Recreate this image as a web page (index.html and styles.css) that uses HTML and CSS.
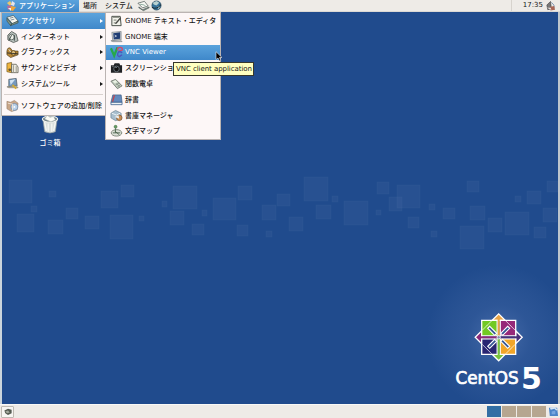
FILE: index.html
```html
<!DOCTYPE html>
<html lang="ja">
<head>
<meta charset="utf-8">
<title>デスクトップ</title>
<link rel="stylesheet" href="styles.css">
</head>
<body>
<div class="screen">
  <header class="panel top">
    <div class="menu-title active">
      <svg class="foot" viewBox="0 0 12 12"><path d="M2 3l3-2 2 3-2 2z" fill="#e9c76a"/><path d="M7 1l3 2-1 3-3-1z" fill="#e8e3ea"/><path d="M2 6l4-1 1 3-4 2z" fill="#b86b9c"/><path d="M6 6l5 1-3 4-3-1z" fill="#f0a53a"/><path d="M3 8l3 0 0 3z" fill="#f6f2e6"/></svg>
      <span class="t apps">アプリケーション</span>
    </div>
    <span class="t place">場所</span>
    <span class="t system">システム</span>
    <svg class="launch" viewBox="0 0 14 12"><path d="M1 3l7-2 4 5-6 2z" fill="#f8f8f4" stroke="#53605d" stroke-width=".8"/><path d="M2 7l4 3 7-3v1l-6 3-5-3z" fill="#91a69f" stroke="#34413f" stroke-width=".6"/><path d="M3 4l5 1 2 2" stroke="#87a79a" fill="none"/></svg>
    <svg class="globe" viewBox="0 0 12 12"><circle cx="6" cy="6" r="5" fill="#347199" stroke="#233e50" stroke-width=".7"/><path d="M2 3l4-2 3 2-3 3-3-1zM7 7l3 0-2 3z" fill="#b7d0d0"/><path d="M1 8q5 3 10-3" stroke="#18252d" fill="none"/></svg>
    <span class="clock">17:35</span>
    <svg class="volume" viewBox="0 0 12 12"><path d="M2 5l4-4 1 8-4 1z" fill="#777" stroke="#333" stroke-width=".6"/><path d="M7 2q4 3 3 6" fill="none" stroke="#7992b0"/><path d="M5 7l5-1 1 4-5 1z" fill="#a86554"/><path d="M2 8l4 0 1 2z" fill="#eee"/></svg>
  </header>

  <main class="desktop">
    <svg class="wall" viewBox="0 0 560 392" aria-hidden="true">
      <defs><radialGradient id="glow"><stop offset="0" stop-color="#6383bd" stop-opacity=".6"/><stop offset=".45" stop-color="#5577b4" stop-opacity=".25"/><stop offset="1" stop-color="#6383bd" stop-opacity="0"/></radialGradient></defs>
      <g class="squares">
        <rect x="9" y="168" width="23" height="23"/><rect x="17" y="202" width="17" height="18"/><rect x="49" y="179" width="7" height="6"/><rect x="31" y="194" width="6" height="6"/><rect x="48" y="208" width="15" height="14"/><rect x="66" y="196" width="12" height="11"/><rect x="85" y="204" width="14" height="13"/><rect x="101" y="179" width="17" height="17"/><rect x="121" y="173" width="13" height="12"/><rect x="110" y="203" width="23" height="24"/><rect x="139" y="204" width="5" height="5"/><rect x="162" y="189" width="5" height="6"/><rect x="173" y="174" width="24" height="23"/><rect x="170" y="199" width="14" height="14"/><rect x="192" y="212" width="12" height="11"/><rect x="202" y="198" width="5" height="6"/><rect x="213" y="186" width="23" height="22"/><rect x="238" y="174" width="14" height="14"/><rect x="237" y="213" width="11" height="11"/><rect x="262" y="193" width="14" height="15"/><rect x="266" y="219" width="6" height="6"/><rect x="277" y="182" width="13" height="12"/><rect x="289" y="205" width="14" height="14"/><rect x="304" y="165" width="24" height="24"/><rect x="316" y="193" width="15" height="14"/><rect x="344" y="189" width="24" height="24"/><rect x="332" y="184" width="6" height="6"/><rect x="377" y="170" width="12" height="12"/><rect x="397" y="173" width="23" height="23"/><rect x="389" y="185" width="13" height="14"/><rect x="408" y="205" width="11" height="11"/><rect x="376" y="198" width="5" height="5"/><rect x="429" y="192" width="6" height="6"/><rect x="443" y="196" width="12" height="11"/><rect x="431" y="219" width="6" height="6"/><rect x="467" y="169" width="12" height="11"/><rect x="470" y="194" width="15" height="14"/><rect x="460" y="214" width="24" height="23"/><rect x="488" y="206" width="14" height="14"/><rect x="505" y="200" width="24" height="23"/><rect x="515" y="184" width="6" height="6"/><rect x="527" y="179" width="14" height="13"/><rect x="534" y="215" width="12" height="11"/><rect x="543" y="196" width="14" height="14"/><rect x="547" y="169" width="11" height="11"/>
      </g>
      <circle cx="499" cy="325" r="72" fill="url(#glow)"/>
      <g transform="translate(498.7 325.3)" stroke="#fff" stroke-width="1.3">
        <path d="M-6.5-17L0-23.5 6.5-17z" fill="#eaa546"/>
        <path d="M17-6.5L23.5 0 17 6.5z" fill="#483078"/>
        <path d="M6.5 17L0 23.5-6.5 17z" fill="#7ac33d"/>
        <path d="M-17 6.5L-23.5 0-17-6.5z" fill="#8c2878"/>
        <path d="M-17-17H-1.5V-1.5H-17z" fill="#72c923"/><path d="M1.5-17H17V-1.5H1.5z" fill="#962879"/><path d="M1.5 1.5H17V17H1.5z" fill="#f2a629"/><path d="M-17 1.5H-1.5V17H-17z" fill="#292572"/>
        <g stroke="none"><path d="M-1-19H1V-1H-1z" fill="#eaa546"/><path d="M1-1H19V1H1z" fill="#483078"/><path d="M-1 1H1V19H-1z" fill="#7ac33d"/><path d="M-19-1H-1V1H-19z" fill="#8c2878"/></g>
        <g fill="#345494" stroke-width="1.1">
          <path d="M2-4L9-11 11-9 4-2z"/><path d="M4 2L11 9 9 11 2 4z"/><path d="M-2 4L-9 11-11 9-4 2z"/><path d="M-4-2L-11-9-9-11-2-4z"/>
          <path d="M7-16.5L12-11.5M16.5-7L11.5-12M7 16.5L12 11.5M16.5 7L11.5 12M-7-16.5L-12-11.5M-16.5-7L-11.5-12M-7 16.5L-12 11.5M-16.5 7L-11.5 12" stroke-width=".7"/>
        </g>
        <circle r="1.7" fill="#7989ac" stroke-width=".8"/>
      </g>
      <text class="brand" x="455.5" y="372.2">CentOS</text>
      <text class="five" x="521" y="377">5</text>
    </svg>

    <div class="trash">
      <svg viewBox="0 0 20 22"><path d="M2 5l2 14q6 3 12 0l2-14z" fill="#d9dfdd" stroke="#8b9698" stroke-width=".7"/><path d="M4 8l2 10M8 10v9M12 10v9M16 8l-2 10" stroke="#f8f9f5" stroke-width="1.3"/><ellipse cx="10" cy="5" rx="8.5" ry="3.4" fill="#6e7e84" stroke="#f4f5f0" stroke-width="1.2"/><path d="M4 5l3-4 3 2 4-1 2 4-5 2z" fill="#fbfbf5" stroke="#9daaa9" stroke-width=".5"/></svg>
      <span class="t">ゴミ箱</span>
    </div>
  </main>

  <nav class="menu main-menu">
    <div class="row active"><svg class="icon" viewBox="0 0 14 14"><path d="M1 3l7-2 5 6-6 3z" fill="#f7f7ee" stroke="#394b4e" stroke-width=".7"/><path d="M1 4l5 6-1 2-4-5zM5 12l8-3V7l-7 3z" fill="#829a8b" stroke="#2f4140" stroke-width=".6"/><path d="M4 4l4-1M5 6l4-1" stroke="#789"/></svg><span class="t">アクセサリ</span><i></i></div>
    <div class="row"><svg class="icon" viewBox="0 0 14 14"><path d="M2 5l4-4 5 3 2 7-5 2-6-3z" fill="#b8c0bc" stroke="#454c48" stroke-width=".8"/><circle cx="6" cy="7" r="3" fill="#eef0e9" stroke="#5d6863"/><path d="M9 5v6M3 11l3-6" stroke="#3d4946"/></svg><span class="t">インターネット</span><i></i></div>
    <div class="row"><svg class="icon" viewBox="0 0 14 14"><path d="M1 6q1-5 4-3l2 3 6 0v4l-8 3-4-3z" fill="#b88736" stroke="#4d3c1d" stroke-width=".7"/><circle cx="8" cy="8" r="2.5" fill="#e3c27b" stroke="#644718"/><path d="M1 8l12 1" stroke="#35332b"/><path d="M3 4l2 3" stroke="#ddd"/></svg><span class="t">グラフィックス</span><i></i></div>
    <div class="row"><svg class="icon" viewBox="0 0 14 14"><path d="M1 2l5-1v11l-5-1z" fill="#f0b53f" stroke="#66501f" stroke-width=".7"/><path d="M6 3h5l2 3v6H6z" fill="#ece9e1" stroke="#57564b" stroke-width=".8"/><path d="M8 4v8M11 5v7" stroke="#999686"/><circle cx="4" cy="9" r="1.5" fill="#695530"/></svg><span class="t">サウンドとビデオ</span><i></i></div>
    <div class="row"><svg class="icon" viewBox="0 0 14 14"><path d="M3 2l8-1 1 8-9 1z" fill="#7599be" stroke="#52606b" stroke-width=".8"/><path d="M4 3l6-1-5 6z" fill="#d1e2f2"/><path d="M1 10l10-1 2 2H3z" fill="#cdc8b6" stroke="#747164" stroke-width=".7"/><path d="M7 8l4 4" stroke="#d1aa39" stroke-width="2"/></svg><span class="t">システムツール</span><i></i></div>
    <hr>
    <div class="row software"><svg class="icon" viewBox="0 0 14 14"><path d="M1 2l4 1 4-2 4 3-1 7-6 2-5-3z" fill="#c9a789" stroke="#927a66" stroke-width=".6"/><circle cx="9" cy="8" r="3.8" fill="#b8d0e9" stroke="#6681a1" stroke-width=".7"/><circle cx="9" cy="8" r="1" fill="#fff"/><path d="M2 4l5 1v7" fill="none" stroke="#eee1d5"/></svg><span class="t">ソフトウェアの追加/削除</span></div>
  </nav>

  <nav class="menu submenu">
    <div class="row"><svg class="icon" viewBox="0 0 14 14"><path d="M2 2h9l1 10H2z" fill="#f3f3ec" stroke="#404640"/><path d="M3 3h7M4 6h3M4 9h2" stroke="#777b71"/><path d="M5 10l6-7 1 1-5 6z" fill="#474743"/></svg><span class="t">GNOME テキスト・エディタ</span></div>
    <div class="row"><svg class="icon" viewBox="0 0 14 14"><path d="M2 2l10-1v9L3 11z" fill="#d6d9d7" stroke="#747b82" stroke-width=".7"/><path d="M3.5 3l7.5-1v7l-7 .8z" fill="#203d74"/><path d="M5 5l2 1-2 1" stroke="#fff" fill="none" stroke-width=".7"/><path d="M1 11l10-1 2 2H3z" fill="#ccd0cd" stroke="#686f74" stroke-width=".6"/></svg><span class="t">GNOME 端末</span></div>
    <div class="row active"><svg class="icon" viewBox="0 0 14 14"><path d="M1 3l3.5 8L8 2" fill="none" stroke="#27a84a" stroke-width="2.4"/><path d="M8 5q0-3 3-3t2 3l-4 1" fill="none" stroke="#d64869" stroke-width="1.5"/><path d="M13 8q-1-2-4-1-2 4 1 5l3-2" fill="none" stroke="#4d55bd" stroke-width="1.5"/></svg><span class="t">VNC Viewer</span></div>
    <div class="row"><svg class="icon" viewBox="0 0 14 14"><path d="M1 4h3l1-2h5l1 2h2v8H1z" fill="#202225"/><circle cx="7" cy="8" r="3" fill="#111" stroke="#69727a"/><path d="M6 7l1-1" stroke="#c4d5e1"/><path d="M2 5h2" stroke="#888"/></svg><span class="t">スクリーンショ</span></div>
    <div class="row"><svg class="icon" viewBox="0 0 14 14"><path d="M1 4l5-2 7 7-5 3z" fill="#c2cdbf" stroke="#5f685e" stroke-width=".8"/><path d="M3 4l3-1 2 2-3 1z" fill="#edf5e7"/><path d="M6 8l4-2M8 10l3-2M7 6l3 4" stroke="#788379" stroke-width=".7"/></svg><span class="t">関数電卓</span></div>
    <div class="row"><svg class="icon" viewBox="0 0 14 14"><path d="M3 1.5h9l1 8H1z" fill="#6389bd" stroke="#36577d" stroke-width=".7"/><path d="M4 2h1.5l-2 7H2z" fill="#bd4751"/><path d="M1 9.5h12v2.5H1z" fill="#edf1f3" stroke="#345b8b" stroke-width=".8"/></svg><span class="t">辞書</span></div>
    <div class="row"><svg class="icon" viewBox="0 0 14 14"><path d="M1 4l5-3 6 3v6l-6 2-5-3z" fill="#a7bdcd" stroke="#657e8e" stroke-width=".7"/><path d="M2 4l5 2 4-2" stroke="#eff6f8" fill="none"/><circle cx="10" cy="9" r="3" fill="#c68d55" stroke="#77502f" stroke-width=".7"/><path d="M5 8l4-2 1 4z" fill="#e9eef0"/></svg><span class="t">書庫マネージャ</span></div>
    <div class="row"><svg class="icon" viewBox="0 0 14 14"><ellipse cx="7" cy="9" rx="5.7" ry="3.5" fill="#dce1d8" stroke="#616c5e" stroke-width=".8"/><circle cx="6" cy="2.5" r="1.6" fill="#669b64" stroke="#3f6e3e" stroke-width=".6"/><path d="M6 4v5M3 9h8M5 7l5 4" stroke="#4f6650"/></svg><span class="t">文字マップ</span></div>
  </nav>

  <div class="tooltip"><span>VNC client application</span></div>
  <svg class="cursor" viewBox="0 0 8 11"><path d="M1 .7V8.5L3 7l1.5 3 1.3-.7L4.5 6.5H7z" fill="#000" stroke="#e9edf4" stroke-width=".6"/></svg>

  <footer class="panel bottom">
    <div class="show-desktop"><svg viewBox="0 0 10 10"><path d="M1 4l4-2 4 1v4L5 9 2 7z" fill="#555c52"/><path d="M2 5l3-1 2 2-3 1z" fill="#a4aa9f"/></svg></div>
    <div class="pager"><b class="current"></b><b></b><b></b><b></b></div>
    <svg class="bin" viewBox="0 0 12 12"><path d="M1 2h9l1 9H2z" fill="#4b84c8"/><path d="M2 2l5-1 4 3-2 1-2-2-4 1z" fill="#d7e5f3"/><path d="M4 6l4-1v4H4z" fill="#77a6df"/></svg>
  </footer>
</div>
</body>
</html>
```
FILE: styles.css
```css
* { box-sizing: border-box; }
body { margin: 0; font-family: "DejaVu Sans", "Noto Sans CJK JP", sans-serif; font-size: 7px; color: #171717; }
svg { display: block; flex: none; }
.screen { position: relative; width: 560px; height: 418px; display: flex; flex-direction: column; overflow: hidden; background: #204b8d; }
.t { white-space: nowrap; line-height: 12px; font-weight: 500; }
.panel { display: flex; align-items: center; background: #eeebe7; flex: none; }
.top { height: 12px; border-bottom: 1px solid #dcd9d4; }
.menu-title { display: flex; align-items: center; width: 79px; height: 12px; padding-left: 5px; gap: 2px; }
.active { background: linear-gradient(#5ba3dc, #3f88ca); color: #fff; }
.foot { width: 12px; height: 12px; }
.place { margin-left: 4px; width: 14px; }
.system { margin-left: 8px; width: 28px; }
.launch { width: 13px; height: 12px; margin-left: 4px; }
.globe { width: 11px; height: 11px; margin-left: 1px; }
.clock { margin-left: auto; padding-left: 11px; line-height: 11px; font-size: 7px; border-left: 1px solid #d7d3cd; white-space: nowrap; }
.volume { width: 11px; height: 12px; margin: 0 4px 0 2px; }
.desktop { height: 392px; border-left: 2px solid #cbd5dc; border-right: 2px solid #bdc5cc; overflow: hidden; position: relative; background: #204b8d; }
.wall { width: 560px; height: 392px; margin-left: -2px; }
.squares { fill: #7188bd; fill-opacity: .1; stroke: #8499cb; stroke-opacity: .05; }
.brand, .five { fill: #fff; font-family: "DejaVu Sans", sans-serif; }
.brand { font-size: 16.8px; stroke: #fff; stroke-width: .7px; }
.five { font-weight: 700; font-size: 30px; }
.trash { position: absolute; left: 35px; top: 102px; width: 26px; display: flex; flex-direction: column; align-items: center; color: #fff; }
.trash svg { width: 18px; height: 21px; margin-bottom: 2px; }
.menu { position: absolute; background: #fdf7f7; border: 1px solid #bbb4b2; display: flex; flex-direction: column; }
.main-menu { left: 1px; top: 12px; width: 105px; height: 104px; }
.submenu { left: 105px; top: 12px; width: 116px; height: 128px; }
.row { display: flex; align-items: center; height: 15.8px; padding-left: 4px; gap: 2px; flex: none; }
.software .t { letter-spacing: .15px; }
.icon { width: 13px; height: 14px; }
.row i { margin-left: auto; margin-right: 2px; border-left: 3px solid currentColor; border-top: 2px solid transparent; border-bottom: 2px solid transparent; }
.menu hr { width: 99px; height: 1px; border: 0; margin: 2px 2px 3px; background: #d8d1ce; }
.tooltip { position: absolute; left: 173px; top: 62px; width: 81px; height: 14px; padding-left: 2px; background: #ffffc0; border: 1px solid #37372c; line-height: 13px; letter-spacing: -.06px; white-space: nowrap; }
.cursor { position: absolute; left: 215px; top: 51px; width: 8px; height: 11px; }
.bottom { height: 14px; border-top: 1px solid #faf9f6; }
.show-desktop { display: flex; align-items: center; justify-content: center; width: 13px; height: 12px; margin-left: 1px; border: 1px solid #bebab3; border-radius: 1px; background: #f7f6f3; }
.show-desktop svg { width: 10px; height: 9px; }
.pager { display: flex; gap: 1px; margin-left: auto; }
.pager b { width: 14px; height: 11px; background: #b6a690; }
.pager .current { background: #336fa4; }
.bin { width: 11px; height: 11px; margin: 0 1px 0 2px; }
```
